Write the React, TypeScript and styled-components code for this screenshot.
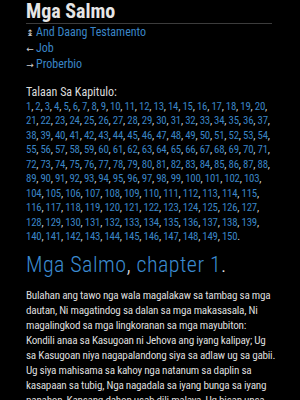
import React from "react";
import styled, { createGlobalStyle } from "styled-components";

const GlobalStyle = createGlobalStyle`
  html, body {
    margin: 0;
    padding: 0;
    background: #000;
  }
  body {
    font-family: "Roboto Condensed", Roboto, sans-serif;
    color: #dcdcdc;
  }
`;

const Page = styled.main`
  padding: 0 28px 0 26px;
  font-size: 12px;
  line-height: 15px;
`;

const Title = styled.h1`
  margin: 0;
  font-size: 20px;
  line-height: 22px;
  font-weight: 700;
  color: #e6e6e6;
  border-bottom: 1px solid #3c3c3c;
  padding-bottom: 1px;
`;

const NavList = styled.ul`
  list-style: none;
  margin: 1px 0 0;
  padding: 0;
`;

const NavItem = styled.li`
  display: flex;
  align-items: baseline;
  gap: 2px;
  line-height: 15px;
`;

const Arrow = styled.span`
  font-family: "DejaVu Sans", sans-serif;
  color: #d0d0d0;
  font-size: 9px;
  width: 8px;
  text-align: center;
`;

const Link = styled.a`
  color: #3a85c6;
  text-decoration: none;
`;

const Label = styled.p`
  margin: 11.5px 0 0;
`;

const Chapters = styled.div`
  font-size: 10.8px;
  line-height: 14.5px;
  letter-spacing: -0.2px;
`;

const ChapterRow = styled.div`
  white-space: nowrap;
`;

const Heading = styled.h2`
  margin: 6.5px 0 8.5px;
  font-size: 22px;
  line-height: 28px;
  font-weight: 300;
  letter-spacing: 0.45px;
  color: #e6e6e6;

  ${Link} {
    color: #3b8bd0;
  }
`;

const Verse = styled.p`
  margin: 0;
  font-size: 11.2px;
  letter-spacing: -0.25px;
  white-space: nowrap;
`;

// chapter rows as they break in the original layout
const rows: [number, number][] = [
  [1, 20],
  [21, 37],
  [38, 54],
  [55, 71],
  [72, 88],
  [89, 103],
  [104, 115],
  [116, 127],
  [128, 139],
  [140, 150],
];

const verseLines = [
  "Bulahan ang tawo nga wala magalakaw sa tambag sa mga",
  "dautan, Ni magatindog sa dalan sa mga makasasala, Ni",
  "magalingkod sa mga lingkoranan sa mga mayubiton:",
  "Kondili anaa sa Kasugoan ni Jehova ang iyang kalipay; Ug",
  "sa Kasugoan niya nagapalandong siya sa adlaw ug sa gabii.",
  "Ug siya mahisama sa kahoy nga natanum sa daplin sa",
  "kasapaan sa tubig, Nga nagadala sa iyang bunga sa iyang",
  "panahon, Kansang dahon usab dili malaya, Ug bisan unsa",
  "ang iyang pagabuhaton magamauswagon.",
];

export default function App() {
  return (
    <>
      <GlobalStyle />
      <Page>
        <Title>Mga Salmo</Title>
        <NavList>
          <NavItem>
            <Arrow>↨</Arrow>
            <Link href="#">And Daang Testamento</Link>
          </NavItem>
          <NavItem>
            <Arrow>←</Arrow>
            <Link href="#">Job</Link>
          </NavItem>
          <NavItem>
            <Arrow>→</Arrow>
            <Link href="#">Proberbio</Link>
          </NavItem>
        </NavList>
        <Label>Talaan Sa Kapitulo:</Label>
        <Chapters>
          {rows.map(([from, to]) => (
            <ChapterRow key={from}>
              {Array.from({ length: to - from + 1 }, (_, i) => from + i).map(
                (n) => (
                  <React.Fragment key={n}>
                    <Link href="#">{n}</Link>
                    {n === 150 ? "." : n === to ? "," : ", "}
                  </React.Fragment>
                )
              )}
            </ChapterRow>
          ))}
        </Chapters>
        <Heading>
          <Link href="#">Mga Salmo</Link>, <Link href="#">chapter 1</Link>.
        </Heading>
        <Verse>
          {verseLines.map((line, i) => (
            <React.Fragment key={i}>
              {line}
              {i < verseLines.length - 1 && <br />}
            </React.Fragment>
          ))}
        </Verse>
      </Page>
    </>
  );
}
